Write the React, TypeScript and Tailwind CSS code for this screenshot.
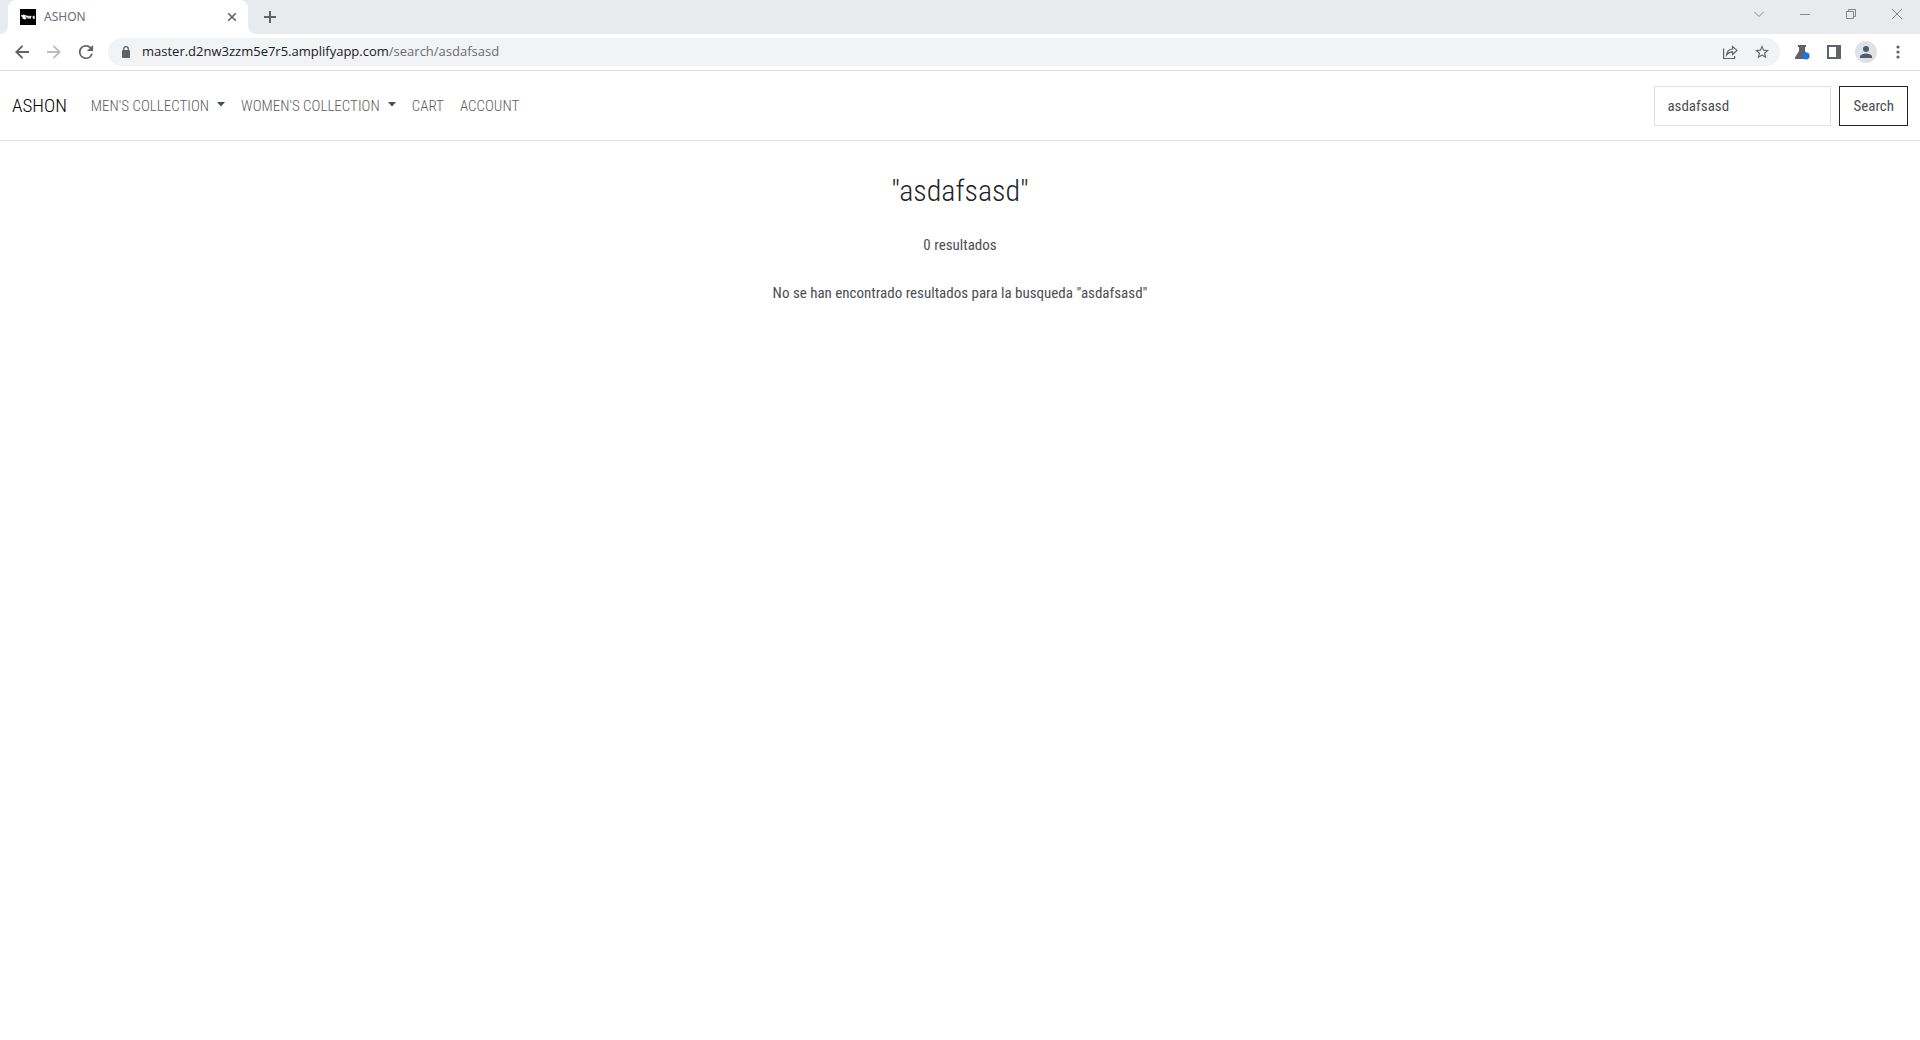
import React from "react";

const navLink = "flex items-center gap-2 text-[#5c5c5c] hover:text-black";

function Caret() {
  return (
    <svg width="8" height="5" viewBox="0 0 8 5" className="mb-[3px] fill-[#4d4d4d]" aria-hidden="true">
      <path d="M0 0h8L4 4.6z" />
    </svg>
  );
}

function TabStrip() {
  return (
    <div className="flex h-[34px] items-center bg-[#e8eaed]">
      <svg width="8" height="34" className="shrink-0" aria-hidden="true">
        <path d="M8 26v8H0a8 8 0 0 0 8-8z" fill="#fff" />
      </svg>
      <div className="flex h-full w-60 items-center rounded-t-lg bg-white pl-3 pr-2">
        <svg width="16" height="16" viewBox="0 0 16 16" className="shrink-0" aria-hidden="true">
          <rect width="16" height="16" fill="#000" />
          <path d="M1 5.500l1.500.8L4 5.200l.6 1 1.600-.2-.6 1.500.5 2.600-1.500.3-1-.7-1.100.2.200-1.500-1.200-.9z" fill="#fff" />
          <path d="M6 7.400h2M7 6.500v3M8.300 7.300h1.500v1.900H8.300zM10.500 9.500V7.300h1M14.800 8.300h-1.700v-1h1.600M13.100 8.300v1h1.700" fill="none" stroke="#fff" />
        </svg>
        <span className="ml-2 flex-1 text-xs text-[#6a6e73]">ASHON</span>
        <button aria-label="Close tab" className="flex size-4 items-center justify-center">
          <svg width="10" height="10" viewBox="0 0 10 10" stroke="#5f6368" strokeWidth="1.6">
            <path d="M1.200 1.200l7.600 7.600M8.800 1.200L1.200 8.800" />
          </svg>
        </button>
      </div>
      <svg width="8" height="34" className="shrink-0" aria-hidden="true">
        <path d="M0 26v8h8a8 8 0 0 1-8-8z" fill="#fff" />
      </svg>
      <button aria-label="New tab" className="flex size-7 items-center justify-center">
        <svg width="12" height="12" viewBox="0 0 12 12" stroke="#5f6368" strokeWidth="2">
          <path d="M6 0v12M0 6h12" />
        </svg>
      </button>
      <div className="mb-1.5 ml-auto flex h-7 items-center">
        <button aria-label="Search tabs" className="flex w-[46px] justify-center">
          <svg width="10" height="10" viewBox="0 0 10 10" fill="none" stroke="#85878a">
            <path d="M0 2.500l5 5 5-5" />
          </svg>
        </button>
        <button aria-label="Minimize" className="flex w-[46px] justify-center">
          <svg width="10" height="10" viewBox="0 0 10 10" fill="none" stroke="#85878a">
            <path d="M0 5.500h10" />
          </svg>
        </button>
        <button aria-label="Restore" className="flex w-[46px] justify-center">
          <svg width="10" height="10" viewBox="0 0 10 10" fill="none" stroke="#85878a">
            <path d="M.5 2.500h7v7h-7zM2.500 2.500v-2h7v7h-2" />
          </svg>
        </button>
        <button aria-label="Close" className="flex w-[46px] justify-center">
          <svg width="10" height="10" viewBox="0 0 10 10" fill="none" stroke="#85878a">
            <path d="M0 0l10 10M10 0L0 10" />
          </svg>
        </button>
      </div>
    </div>
  );
}

function IconButton({ label, children }: { label: string; children: React.ReactNode }) {
  return (
    <button aria-label={label} className="flex h-7 w-8 shrink-0 items-center justify-center">
      {children}
    </button>
  );
}

function Toolbar() {
  return (
    <div className="flex h-[37px] items-center border-b border-[#dadce0] bg-white px-1.5">
      <IconButton label="Back">
        <svg width="14" height="14" viewBox="0 0 14 14" fill="none" stroke="#5f6368" strokeWidth="1.9">
          <path d="M14 7H1.500M7.500.8L1.300 7l6.200 6.200" />
        </svg>
      </IconButton>
      <IconButton label="Forward">
        <svg width="14" height="14" viewBox="0 0 14 14" fill="none" stroke="#babcbe" strokeWidth="1.9">
          <path d="M0 7h12.500M6.500.8L12.700 7l-6.200 6.200" />
        </svg>
      </IconButton>
      <IconButton label="Reload">
        <svg viewBox="3 3 18 18" className="size-4 fill-[#5f6368]">
          <path d="M17.650 6.350A7.960 7.960 0 0 0 12 4a8 8 0 1 0 7.730 10h-2.080A6 6 0 1 1 12 6c1.660 0 3.140.69 4.220 1.780L13 11h7V4l-2.350 2.350z" />
        </svg>
      </IconButton>
      <div className="ml-1.5 flex h-7 flex-1 items-center rounded-full bg-[#f1f3f4] pl-3 pr-0.5">
        <svg width="12" height="12" viewBox="0 0 12 12" className="shrink-0" aria-hidden="true">
          <rect x="2" y="4" width="8" height="8" rx="1" fill="#5f6368" />
          <path d="M3.700 4.500V3a2.300 2.300 0 0 1 4.600 0v1.500" fill="none" stroke="#5f6368" strokeWidth="1.3" />
        </svg>
        <a
          href="https://master.d2nw3zzm5e7r5.amplifyapp.com/search/asdafsasd"
          className="ml-2.5 flex-1 font-['Open_Sans',sans-serif] text-[13px] text-[#202124]"
        >
          master.d2nw3zzm5e7r5.amplifyapp.com<span className="text-[#6a6e73]">/search/asdafsasd</span>
        </a>
        <IconButton label="Share">
          <svg width="16" height="16" viewBox="0 0 16 16" fill="none" stroke="#5f6368" strokeWidth="1.2">
            <path d="M1.600 4.500v10h11V12" />
            <path d="M4.600 10.800C5 7.300 7 5.300 10.600 5V2.500l4.400 3.900-4.400 4V7.900c-2.700 0-4.500.9-6 2.900z" />
          </svg>
        </IconButton>
        <IconButton label="Bookmark">
          <svg width="14" height="14" viewBox="2 2 20 20" fill="#5f6368">
            <path d="M22 9.240l-7.190-.62L12 2 9.190 8.630 2 9.240l5.460 4.730L5.820 21 12 17.270 18.180 21l-1.630-7.030L22 9.240zM12 15.400l-3.760 2.270 1-4.280-3.320-2.880 4.380-.38L12 6.100l1.710 4.040 4.380.38-3.320 2.880 1 4.280L12 15.400z" />
          </svg>
        </IconButton>
      </div>
      <div className="flex pl-1.5">
        <IconButton label="Labs">
          <svg width="16" height="16" viewBox="0 0 16 16" fill="#5f6368">
            <path d="M4 1h8v2h-1v4l3 5v3H1v-1.500L5 7V3H4z" />
            <circle cx="12.2" cy="12" r="3.4" fill="#1a73e8" />
          </svg>
        </IconButton>
        <IconButton label="Side panel">
          <svg width="14" height="14" viewBox="0 0 14 14" fill="#5f6368">
            <path fillRule="evenodd" d="M0 0h14v14H0zM2 2v10h7V2z" />
          </svg>
        </IconButton>
        <IconButton label="Profile">
          <svg width="22" height="22" viewBox="0 0 22 22" fill="#505a6b">
            <circle cx="11" cy="11" r="11" fill="#dee1e6" />
            <circle cx="11" cy="8" r="3" />
            <path d="M5 17v-1.500c0-2 4-3 6-3s6 1 6 3V17z" />
          </svg>
        </IconButton>
        <IconButton label="Menu">
          <svg width="4" height="14" viewBox="0 0 4 14" fill="#5f6368">
            <circle cx="2" cy="2" r="1.6" />
            <circle cx="2" cy="7" r="1.6" />
            <circle cx="2" cy="12" r="1.6" />
          </svg>
        </IconButton>
      </div>
    </div>
  );
}

function Navbar() {
  return (
    <header className="flex items-center border-b border-[#e0e0e0] px-3 pb-3.5 pt-[15px]">
      <a href="#home" className="mr-6 text-[19px] text-black">ASHON</a>
      <nav className="flex items-center gap-4">
        <button className={navLink}>MEN'S COLLECTION<Caret /></button>
        <button className={navLink}>WOMEN'S COLLECTION<Caret /></button>
        <a href="#cart" className={navLink}>CART</a>
        <a href="#account" className={navLink}>ACCOUNT</a>
      </nav>
      <form className="ml-auto flex gap-2 font-normal" onSubmit={(e) => e.preventDefault()}>
        <input
          aria-label="Search products"
          defaultValue="asdafsasd"
          className="h-10 w-[177px] border border-[#dee2e6] px-3 text-[#4a4e53] outline-none"
        />
        <button type="submit" className="h-10 border border-[#212529] px-[13px] text-[#4a4e53]">Search</button>
      </form>
    </header>
  );
}

export default function App() {
  return (
    <div className="min-h-screen bg-white font-['Noto_Sans',sans-serif]">
      <TabStrip />
      <Toolbar />
      <div className="font-['Roboto_Condensed',sans-serif] text-[15px] font-light leading-6">
        <Navbar />
        <main className="px-3 pt-8 text-center text-[#4a4e53]">
          <h1 className="text-[30px] leading-9 text-[#212529]">"asdafsasd"</h1>
          <p className="mt-6 font-normal">0 resultados</p>
          <p className="mt-6 font-normal">No se han encontrado resultados para la busqueda "asdafsasd"</p>
        </main>
      </div>
    </div>
  );
}
